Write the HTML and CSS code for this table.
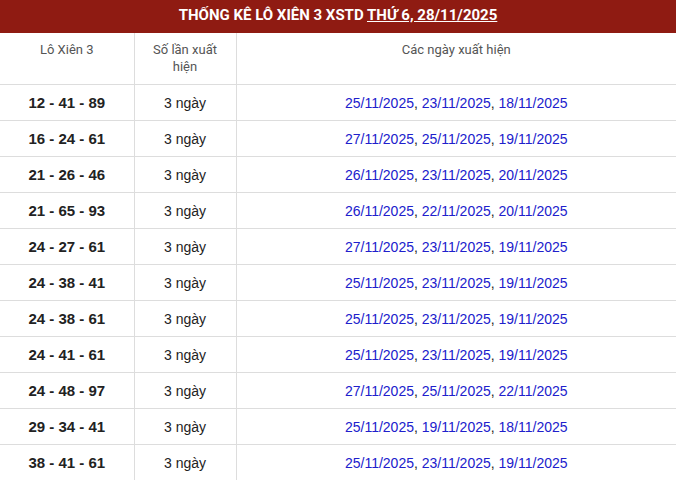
FILE: index.html
```html
<!DOCTYPE html>
<html lang="vi">
<head>
<meta charset="utf-8">
<link rel="stylesheet" href="styles.css">
</head>
<body>
<div class="box">
  <h2 class="title">THỐNG KÊ LÔ XIÊN 3 XSTD <span class="u">THỨ 6, 28/11/2025</span></h2>
  <table class="tbl">
    <colgroup><col class="c1"><col class="c2"><col class="c3"></colgroup>
    <thead>
      <tr><th>Lô Xiên 3</th><th>Số lần xuất hiện</th><th>Các ngày xuất hiện</th></tr>
    </thead>
    <tbody>
      <tr><td class="num">12 - 41 - 89</td><td>3 ngày</td><td><a>25/11/2025</a>, <a>23/11/2025</a>, <a>18/11/2025</a></td></tr>
      <tr><td class="num">16 - 24 - 61</td><td>3 ngày</td><td><a>27/11/2025</a>, <a>25/11/2025</a>, <a>19/11/2025</a></td></tr>
      <tr><td class="num">21 - 26 - 46</td><td>3 ngày</td><td><a>26/11/2025</a>, <a>23/11/2025</a>, <a>20/11/2025</a></td></tr>
      <tr><td class="num">21 - 65 - 93</td><td>3 ngày</td><td><a>26/11/2025</a>, <a>22/11/2025</a>, <a>20/11/2025</a></td></tr>
      <tr><td class="num">24 - 27 - 61</td><td>3 ngày</td><td><a>27/11/2025</a>, <a>23/11/2025</a>, <a>19/11/2025</a></td></tr>
      <tr><td class="num">24 - 38 - 41</td><td>3 ngày</td><td><a>25/11/2025</a>, <a>23/11/2025</a>, <a>19/11/2025</a></td></tr>
      <tr><td class="num">24 - 38 - 61</td><td>3 ngày</td><td><a>25/11/2025</a>, <a>23/11/2025</a>, <a>19/11/2025</a></td></tr>
      <tr><td class="num">24 - 41 - 61</td><td>3 ngày</td><td><a>25/11/2025</a>, <a>23/11/2025</a>, <a>19/11/2025</a></td></tr>
      <tr><td class="num">24 - 48 - 97</td><td>3 ngày</td><td><a>27/11/2025</a>, <a>25/11/2025</a>, <a>22/11/2025</a></td></tr>
      <tr><td class="num">29 - 34 - 41</td><td>3 ngày</td><td><a>25/11/2025</a>, <a>19/11/2025</a>, <a>18/11/2025</a></td></tr>
      <tr><td class="num">38 - 41 - 61</td><td>3 ngày</td><td><a>25/11/2025</a>, <a>23/11/2025</a>, <a>19/11/2025</a></td></tr>
    </tbody>
  </table>
</div>
</body>
</html>
```
FILE: styles.css
```css
html, body { margin: 0; padding: 0; background: #fff; }
body { font-family: "Liberation Sans", Arial, sans-serif; color: #222; }
.box { width: 676px; }
.title {
  margin: 0;
  height: 33px;
  line-height: 30px;
  background: #8f1b12;
  color: #fff;
  font-family: Roboto, "Liberation Sans", sans-serif;
  font-weight: 700;
  font-size: 15px;
  text-align: center;
}
.title .u { text-decoration: underline; }
.tbl { width: 676px; border-collapse: collapse; table-layout: fixed; }
.c1 { width: 134px; }
.c2 { width: 102px; }
.tbl th {
  font-weight: 400;
  font-size: 13px;
  color: #555;
  font-family: Roboto, "Liberation Sans", sans-serif;
  line-height: 17px;
  vertical-align: top;
  padding: 8px 14px 9px;
  border-left: 1px solid #ddd;
  border-bottom: 1px solid #ddd;
  text-align: center;
}
.tbl td {
  height: 35px;
  padding: 0 6px;
  font-size: 14px;
  text-align: center;
  border-left: 1px solid #ddd;
  border-bottom: 1px solid #ddd;
  color: #222;
}
.tbl th:first-child, .tbl td:first-child { border-left: none; }
.tbl td.num { font-weight: 700; font-size: 15px; color: #222; }
.tbl td a { color: #2020cc; }
```
